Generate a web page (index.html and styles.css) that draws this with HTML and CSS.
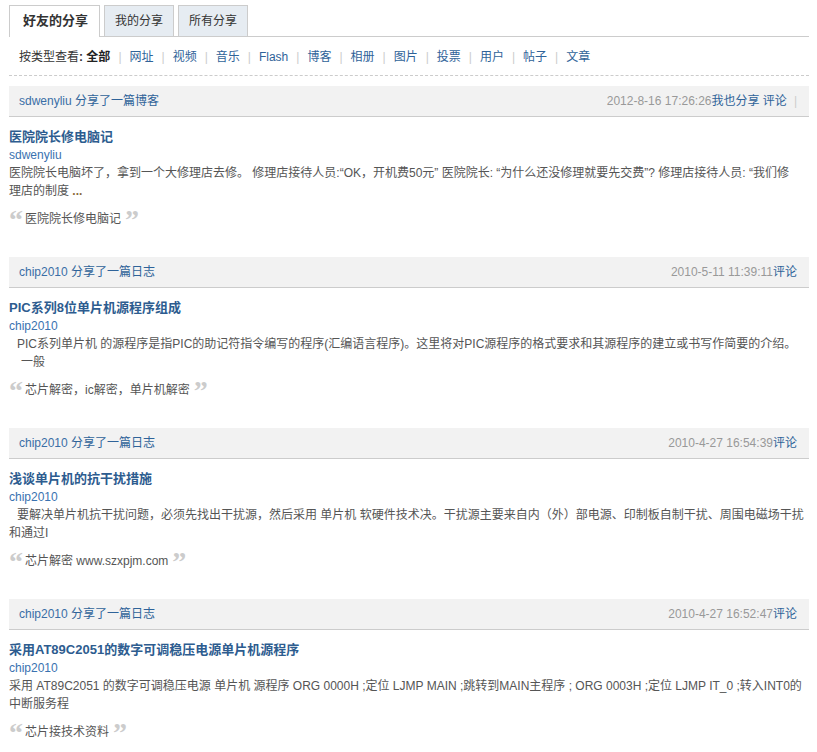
FILE: index.html
```html
<!DOCTYPE html>
<html lang="zh-CN">
<head>
<meta charset="utf-8">
<title>好友的分享</title>
<link rel="stylesheet" href="styles.css">
</head>
<body>
<div class="page">
  <ul class="tabs">
    <li class="tab active">好友的分享</li>
    <li class="tab">我的分享</li>
    <li class="tab">所有分享</li>
  </ul>

  <div class="filter">
    <span class="label">按类型查看<b>:</b></span> <b class="current">全部</b><span class="sep">|</span><a href="#">网址</a><span class="sep">|</span><a href="#">视频</a><span class="sep">|</span><a href="#">音乐</a><span class="sep">|</span><a href="#">Flash</a><span class="sep">|</span><a href="#">博客</a><span class="sep">|</span><a href="#">相册</a><span class="sep">|</span><a href="#">图片</a><span class="sep">|</span><a href="#">投票</a><span class="sep">|</span><a href="#">用户</a><span class="sep">|</span><a href="#">帖子</a><span class="sep">|</span><a href="#">文章</a>
  </div>

  <div class="feed">
    <div class="item">
      <div class="item-head">
        <span class="who"><a href="#">sdwenyliu</a> 分享了一篇博客</span>
        <span class="meta"><span class="date">2012-8-16 17:26:26</span><a href="#">我也分享</a> <a href="#">评论</a><span class="sep">|</span></span>
      </div>
      <div class="item-body">
        <a class="title" href="#">医院院长修电脑记</a>
        <a class="author" href="#">sdwenyliu</a>
        <div class="desc">医院院长电脑坏了，拿到一个大修理店去修。 修理店接待人员:“OK，开机费50元” 医院院长: “为什么还没修理就要先交费”? 修理店接待人员: “我们修<br>理店的制度 <span class="more">...</span></div>
        <div class="quote"><span class="q">“</span><span class="qt">医院院长修电脑记</span><span class="q close">”</span></div>
      </div>
    </div>

    <div class="item">
      <div class="item-head">
        <span class="who"><a href="#">chip2010</a> 分享了一篇日志</span>
        <span class="meta"><span class="date">2010-5-11 11:39:11</span><a href="#">评论</a></span>
      </div>
      <div class="item-body">
        <a class="title" href="#">PIC系列8位单片机源程序组成</a>
        <a class="author" href="#">chip2010</a>
        <div class="desc indent">PIC系列单片机 的源程序是指PIC的助记符指令编写的程序(汇编语言程序)。这里将对PIC源程序的格式要求和其源程序的建立或书写作简要的介绍。</div>
        <div class="desc indent2">一般</div>
        <div class="quote"><span class="q">“</span><span class="qt">芯片解密，ic解密，单片机解密</span><span class="q close">”</span></div>
      </div>
    </div>

    <div class="item">
      <div class="item-head">
        <span class="who"><a href="#">chip2010</a> 分享了一篇日志</span>
        <span class="meta"><span class="date">2010-4-27 16:54:39</span><a href="#">评论</a></span>
      </div>
      <div class="item-body">
        <a class="title" href="#">浅谈单片机的抗干扰措施</a>
        <a class="author" href="#">chip2010</a>
        <div class="desc first-indent">要解决单片机抗干扰问题，必须先找出干扰源，然后采用 单片机 软硬件技术决。干扰源主要来自内（外）部电源、印制板自制干扰、周围电磁场干扰<br>和通过I</div>
        <div class="quote"><span class="q">“</span><span class="qt">芯片解密 www.szxpjm.com</span><span class="q close">”</span></div>
      </div>
    </div>

    <div class="item">
      <div class="item-head">
        <span class="who"><a href="#">chip2010</a> 分享了一篇日志</span>
        <span class="meta"><span class="date">2010-4-27 16:52:47</span><a href="#">评论</a></span>
      </div>
      <div class="item-body">
        <a class="title" href="#">采用AT89C2051的数字可调稳压电源单片机源程序</a>
        <a class="author" href="#">chip2010</a>
        <div class="desc">采用 AT89C2051 的数字可调稳压电源 单片机 源程序 ORG 0000H ;定位 LJMP MAIN ;跳转到MAIN主程序 ; ORG 0003H ;定位 LJMP IT_0 ;转入INT0的<br>中断服务程</div>
        <div class="quote"><span class="q">“</span><span class="qt">芯片接技术资料</span><span class="q close">”</span></div>
      </div>
    </div>
  </div>
</div>
</body>
</html>
```

FILE: styles.css
```css
body {
  margin: 0;
  font: 12px/18px "Liberation Sans", "Noto Sans CJK SC", sans-serif;
  color: #555;
  background: #fff;
}

a {
  color: #2f6399;
  text-decoration: none;
}

.page {
  width: 800px;
  padding: 5px 0 0 9px;
}

/* tabs */
.tabs {
  list-style: none;
  margin: 0;
  padding: 0;
  display: flex;
  gap: 4px;
  border-bottom: 1px solid #ccc;
}

.tab {
  height: 30px;
  line-height: 30px;
  padding: 0 10px;
  font-size: 12px;
  color: #333;
  background: #e6ecf2;
  border: 1px solid #ccc;
  border-bottom: 0;
}

.tab.active {
  background: #fff;
  font-size: 13px;
  font-weight: bold;
  padding: 0 11px 1px 13px;
  margin-bottom: -1px;
}

/* filter row */
.filter {
  margin-top: 11px;
  padding: 0 0 9px 10px;
  line-height: 18px;
  border-bottom: 1px dashed #ccc;
  color: #333;
}

.filter .label {
  color: #333;
}

.filter .current {
  color: #222;
}

.sep {
  color: #ccc;
  margin: 0 8px;
}

/* feed */
.feed {
  margin-top: 10px;
}

.item-head {
  display: flex;
  justify-content: space-between;
  height: 30px;
  line-height: 30px;
  padding: 0 12px 0 10px;
  background: #f2f2f2;
  border-bottom: 1px solid #ccc;
}

.who {
  color: #2f6399;
}

.who a {
  color: #3a6ea6;
}

.date {
  color: #999;
}

.meta .sep {
  margin: 0 0 0 7px;
}

.item-body {
  padding: 11px 0 29px;
}

.title {
  display: block;
  font-size: 13px;
  font-weight: bold;
  color: #2d5c8f;
  line-height: 18px;
}

.author {
  display: block;
  color: #3a72b0;
  line-height: 18px;
}

.desc {
  line-height: 18px;
  color: #555;
}

.desc.indent {
  padding-left: 8px;
}

.desc.indent2 {
  padding-left: 12px;
}

.desc.first-indent {
  text-indent: 8px;
}

.more {
  color: #8a6a3a;
  font-weight: bold;
}

.quote {
  margin-top: 10px;
  line-height: 18px;
  color: #555;
}

.q {
  display: inline-block;
  width: 13px;
  height: 18px;
  vertical-align: top;
  font: bold 28px/20px "Liberation Serif", serif;
  color: #ccc;
}

.q.close {
  width: 11px;
  margin-left: 4px;
}

.qt {
  margin-left: 3px;
}
```
